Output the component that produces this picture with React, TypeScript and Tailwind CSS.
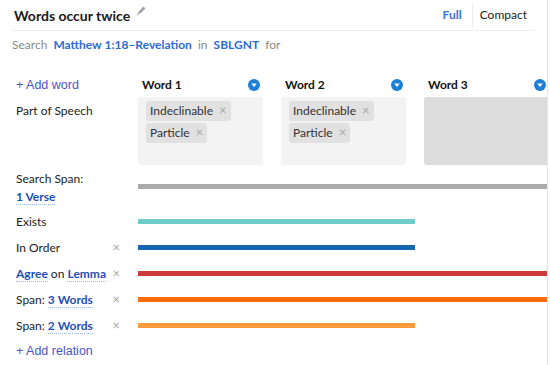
const words = [
  { name: "Word 1", tags: ["Indeclinable", "Particle"] },
  { name: "Word 2", tags: ["Indeclinable", "Particle"] },
  { name: "Word 3", tags: [] as string[] },
]

const Caret = () => (
  <svg width="12" height="12" viewBox="0 0 12 12" aria-hidden="true">
    <circle cx="6" cy="6" r="6" fill="#1c7fd6" />
    <path d="M3.2 4.6h5.6L6 8z" fill="#fff" />
  </svg>
)

const PencilIcon = () => (
  <svg width="10" height="10" viewBox="0 0 10 10" aria-hidden="true" className="mb-[8px]">
    <path d="M7.6 0.6l1.8 1.8-5.6 5.6-1.8-1.8z" fill="#a0a0a0" />
    <path d="M1.6 6.6l1.8 1.8L0.6 9.4z" fill="#c4c4c4" />
  </svg>
)

const Remove = () => <span className="text-[13px] leading-none text-[#a8a8a8]">×</span>

const Link = ({ children }: { children: React.ReactNode }) => (
  <span className="border-b border-dotted border-[#9bb3e0] font-bold text-[#1d4fb8]">
    {children}
  </span>
)

const bars = [
  { label: <>Exists</>, color: "bg-[#6ecdc9]", width: "w-[277px]", remove: false },
  { label: <>In Order</>, color: "bg-[#1666b2]", width: "w-[277px]", remove: true },
  {
    label: (
      <>
        <Link>Agree</Link> on <Link>Lemma</Link>
      </>
    ),
    color: "bg-[#cc3a3c]",
    width: "w-full",
    remove: true,
  },
  {
    label: (
      <>
        Span: <Link>3 Words</Link>
      </>
    ),
    color: "bg-[#ff6a0a]",
    width: "w-full",
    remove: true,
  },
  {
    label: (
      <>
        Span: <Link>2 Words</Link>
      </>
    ),
    color: "bg-[#ff9b3c]",
    width: "w-[277px]",
    remove: true,
  },
]

export default function App() {
  return (
    <div className="h-[365px] w-[550px] overflow-hidden bg-white font-['Lato','Noto_Sans',sans-serif] text-[12px] text-[#222]">
      <div className="h-full w-[548px] overflow-hidden border-r border-[#e6e6e6]">
        <div className="mx-3 flex h-[31px] items-center justify-between border-b border-[#ececec] pl-[2px]">
          <div className="flex items-center gap-[6px]">
            <h1 className="text-[14px] font-bold text-[#1a1a1a]">Words occur twice</h1>
            <PencilIcon />
          </div>
          <div className="mr-[8px] flex h-[25px] items-center text-[12px]">
            <span className="pr-[10px] font-bold text-[#3b74d8]">Full</span>
            <span className="h-full border-l border-[#ececec]" />
            <span className="pl-[7px] text-[#222]">Compact</span>
          </div>
        </div>

        <p className="mt-[5px] pl-[12px] text-[12px] text-[#8a8a8a]">
          Search <b className="mx-[3px] text-[#2f6bd2]">Matthew 1:18–Revelation</b> in{" "}
          <b className="mx-[3px] text-[#2f6bd2]">SBLGNT</b> for
        </p>

        <div className="mt-[22px] grid grid-cols-[104px_125px_125px_125px] gap-x-[18px] pl-[16px]">
          <div className="font-['Liberation_Sans',sans-serif] text-[12.5px] text-[#4b55c6]">+ Add word</div>
          {words.map((word) => (
            <div key={word.name} className="flex items-center justify-between pl-[4px] pr-[3px]">
              <span className="font-bold text-[#111]">{word.name}</span>
              <Caret />
            </div>
          ))}
        </div>

        <div className="mt-[2px] grid grid-cols-[104px_125px_125px_125px] gap-x-[18px] pl-[16px]">
          <div className="pt-[5px]">Part of Speech</div>
          {words.map((word) => (
            <div
              key={word.name}
              className={`flex h-[68px] flex-col items-start gap-[2px] rounded-[3px] px-[8px] pt-[4px] ${
                word.tags.length ? "bg-[#f3f3f3]" : "bg-[#dcdcdc]"
              }`}
            >
              {word.tags.map((tag) => (
                <span
                  key={tag}
                  className="flex h-[20px] items-center gap-[6px] rounded-[3px] bg-[#e1e1e1] px-[4px] text-[#333]"
                >
                  {tag}
                  <Remove />
                </span>
              ))}
            </div>
          ))}
        </div>

        <div className="mt-[5px] flex items-center gap-x-[18px] pl-[16px]">
          <div className="w-[104px] leading-[18px]">
            <div>Search Span:</div>
            <Link>1 Verse</Link>
          </div>
          <div className="mb-[2px] h-[5px] flex-1 bg-[#aaaaaa]" />
        </div>

        <div className="mt-[3px] flex flex-col">
          {bars.map((bar, index) => (
            <div key={index} className="flex h-[26px] items-center gap-x-[18px] pl-[16px]">
              <div className="flex w-[104px] items-center justify-between">
                <span className="whitespace-nowrap">{bar.label}</span>
                {bar.remove && <Remove />}
              </div>
              <div className="flex-1">
                <div className={`h-[5px] ${bar.color} ${bar.width}`} />
              </div>
            </div>
          ))}
        </div>

        <div className="mt-[3px] pl-[16px] font-['Liberation_Sans',sans-serif] text-[12.5px] text-[#4b55c6]">
          + Add relation
        </div>
      </div>
    </div>
  )
}
